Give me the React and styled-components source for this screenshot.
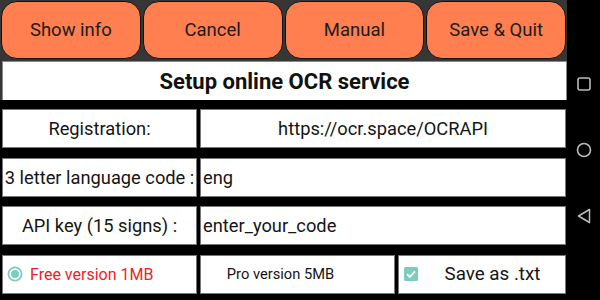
import React from "react";
import styled, { createGlobalStyle, css } from "styled-components";

const GlobalStyle = createGlobalStyle`
  html, body {
    margin: 0;
    padding: 0;
    background: #000;
  }
  body {
    font-family: Roboto, "Noto Sans", "Liberation Sans", sans-serif;
  }
`;

const Screen = styled.div`
  display: flex;
  width: 600px;
  height: 300px;
  overflow: hidden;
  background: #000;
`;

const Main = styled.div`
  width: 567px;
  display: flex;
  flex-direction: column;
  gap: 9px;
`;

// Grey top section: buttons + title
const Header = styled.div`
  background: #363636;
  padding: 1px 1px 0 2px;
  display: flex;
  flex-direction: column;
  gap: 2px;
`;

const ButtonBar = styled.div`
  display: grid;
  grid-template-columns: repeat(4, 1fr);
  gap: 2px;
  margin-left: -1px;
`;

const ActionButton = styled.button`
  height: 58px;
  background: #ff7f50;
  border: 1.5px solid #111;
  border-radius: 16px;
  font-family: inherit;
  font-size: 18.5px;
  color: #1c1c1c;
  padding: 0;
`;

const Title = styled.div`
  height: 39px;
  background: #fff;
  border: 1px solid #888;
  border-bottom: none;
  box-sizing: border-box;
  display: flex;
  align-items: center;
  justify-content: center;
  font-weight: 700;
  font-size: 22px;
  color: #111;
  margin-right: -1px;
`;

const Rows = styled.div`
  display: flex;
  flex-direction: column;
  gap: 9.5px;
  padding-left: 2px;
  padding-right: 1px;
`;

const Row = styled.div`
  display: grid;
  grid-template-columns: ${p => p.cols || "195px 1fr"};
  gap: 3px;
  height: 39px;
`;

const Cell = styled.div`
  background: #fff;
  border: 1px solid #777;
  box-sizing: border-box;
  display: flex;
  align-items: center;
  justify-content: ${p => (p.left ? "flex-start" : "center")};
  padding: ${p => (p.left ? "0 0 0 2px" : "0")};
  font-size: ${p => p.size || 18.3}px;
  color: ${p => p.color || "#151515"};
  white-space: nowrap;
  ${p => p.gapped && css`
    gap: 7px;
    padding-left: 4px;
  `}
  ${p => p.shift && css`
    padding-right: ${p.shift}px;
  `}
`;

const SaveText = styled.span`
  flex: 1;
  text-align: center;
  padding-right: 6px;
  font-size: 18.8px;
`;

const NavBar = styled.div`
  flex: 1;
  background: #000;
  display: flex;
  flex-direction: column;
  align-items: center;
  padding-top: 51px;
`;

const NavSlot = styled.div`
  height: 66px;
  display: flex;
  align-items: center;
  justify-content: center;
`;

function Radio() {
  return (
    <svg width="16" height="16" viewBox="0 0 16 16">
      <circle cx="8" cy="8" r="6.6" fill="none" stroke="#7ccdbd" strokeWidth="1.8" />
      <circle cx="8" cy="8" r="4" fill="#7ccdbd" />
    </svg>
  );
}

function Check() {
  return (
    <svg width="16" height="16" viewBox="0 0 16 16">
      <rect x="1" y="1" width="14" height="14" rx="1.5" fill="#7ccdbd" />
      <path d="M4 8.2 L6.8 11 L12 5.4" fill="none" stroke="#fff" strokeWidth="1.8" />
    </svg>
  );
}

export default function App() {
  return (
    <Screen>
      <GlobalStyle />
      <Main>
        <Header>
          <ButtonBar>
            <ActionButton>Show info</ActionButton>
            <ActionButton>Cancel</ActionButton>
            <ActionButton>Manual</ActionButton>
            <ActionButton>Save &amp; Quit</ActionButton>
          </ButtonBar>
          <Title>Setup online OCR service</Title>
        </Header>
        <Rows>
          <Row>
            <Cell>Registration:</Cell>
            <Cell>https://ocr.space/OCRAPI</Cell>
          </Row>
          <Row>
            <Cell>3 letter language code :</Cell>
            <Cell left>eng</Cell>
          </Row>
          <Row>
            <Cell>API key (15 signs) :</Cell>
            <Cell left>enter_your_code</Cell>
          </Row>
          <Row cols="195px 195px 1fr">
            <Cell left gapped size={16} color="#ec2127">
              <Radio />
              Free version 1MB
            </Cell>
            <Cell size={14.7} shift={34}>Pro version 5MB</Cell>
            <Cell left gapped>
              <Check />
              <SaveText>Save as .txt</SaveText>
            </Cell>
          </Row>
        </Rows>
      </Main>
      <NavBar>
        <NavSlot>
          <svg width="14" height="14" viewBox="0 0 14 14">
            <rect x="1" y="1" width="12" height="12" rx="2" fill="none" stroke="#bbb" strokeWidth="1.6" />
          </svg>
        </NavSlot>
        <NavSlot>
          <svg width="16" height="16" viewBox="0 0 16 16">
            <circle cx="8" cy="8" r="6.5" fill="none" stroke="#bbb" strokeWidth="1.6" />
          </svg>
        </NavSlot>
        <NavSlot>
          <svg width="14" height="16" viewBox="0 0 14 16">
            <path d="M12.5 1.5 L1.5 8 L12.5 14.5 Z" fill="none" stroke="#bbb" strokeWidth="1.5" strokeLinejoin="round" />
          </svg>
        </NavSlot>
      </NavBar>
    </Screen>
  );
}
